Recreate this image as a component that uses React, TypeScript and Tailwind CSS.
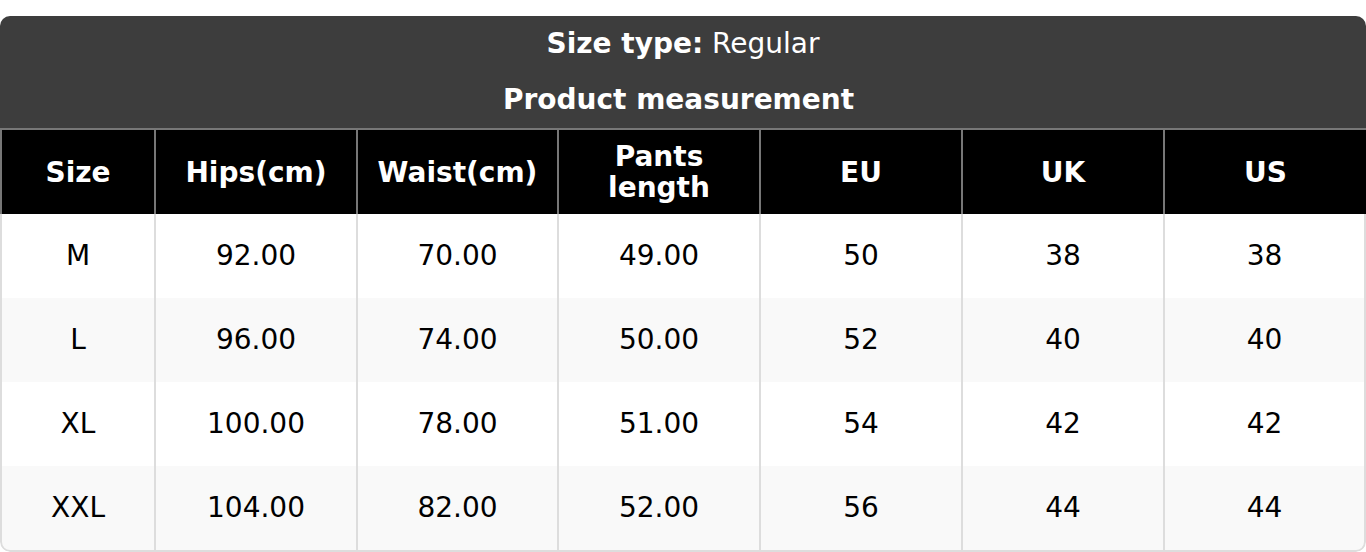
import React from "react";

const headers = ["Size", "Hips(cm)", "Waist(cm)", "Pants length", "EU", "UK", "US"];
const rows = [
  ["M", "92.00", "70.00", "49.00", "50", "38", "38"],
  ["L", "96.00", "74.00", "50.00", "52", "40", "40"],
  ["XL", "100.00", "78.00", "51.00", "54", "42", "42"],
  ["XXL", "104.00", "82.00", "52.00", "56", "44", "44"],
];

export default function App() {
  return (
    <div className="w-[1366px] h-[552px] bg-white pt-4" style={{ fontFamily: '"DejaVu Sans", Verdana, sans-serif' }}>
      <div className="rounded-[10px] overflow-hidden">
        <div className="bg-[#3d3d3d] h-[112px] text-white flex flex-col items-center pt-[12px]">
          <div className="text-[28px] leading-[32px]">
            <span className="font-bold">Size type:</span> Regular
          </div>
          <div className="text-[28px] leading-[32px] font-bold mt-[24px] mr-[9px]">Product measurement</div>
        </div>
        <div className="grid grid-cols-[152px_200px_199px_200px_200px_200px_1fr] gap-x-[2px] bg-[#777] pt-[2px] pl-[2px]">
          {headers.map((h) => (
            <div key={h} className="bg-black text-white font-bold text-[28px] leading-[31px] h-[84px] flex items-center justify-center text-center px-2">
              {h === "Pants length" ? (
                <span>
                  Pants
                  <br />
                  length
                </span>
              ) : (
                h
              )}
            </div>
          ))}
        </div>
        <div className="border-2 border-t-0 border-[#ddd] rounded-b-[10px] overflow-hidden bg-[#ddd]">
          {rows.map((r, i) => (
            <div key={i} className="grid grid-cols-[152px_200px_199px_200px_200px_200px_1fr] gap-x-[2px]">
              {r.map((c, j) => (
                <div
                  key={j}
                  className={`${i % 2 === 0 ? "bg-white" : "bg-[#f9f9f9]"} h-[84px] flex items-center justify-center text-[28px] text-black`}
                >
                  {c}
                </div>
              ))}
            </div>
          ))}
        </div>
      </div>
    </div>
  );
}
